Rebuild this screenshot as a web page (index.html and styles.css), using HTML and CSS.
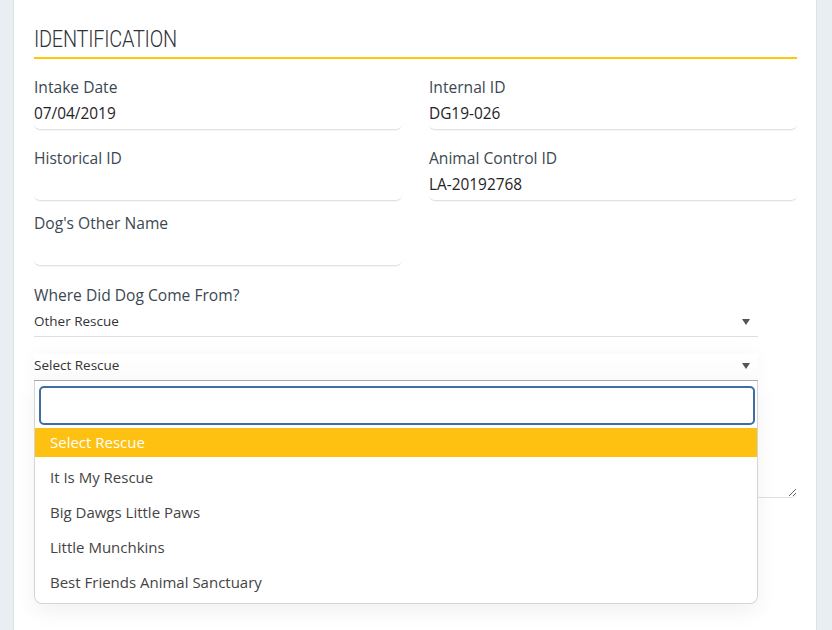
FILE: index.html
```html
<!DOCTYPE html>
<html>
<head>
<meta charset="utf-8">
<link rel="stylesheet" href="styles.css">
</head>
<body>
<div class="card">
  <h2 class="section-title"><span class="section-title-text">IDENTIFICATION</span></h2>
  <div class="grid">
    <div class="field">
      <label class="label">Intake Date</label>
      <div class="input">07/04/2019</div>
    </div>
    <div class="field">
      <label class="label">Internal ID</label>
      <div class="input">DG19-026</div>
    </div>
    <div class="field">
      <label class="label">Historical ID</label>
      <div class="input"></div>
    </div>
    <div class="field">
      <label class="label">Animal Control ID</label>
      <div class="input">LA-20192768</div>
    </div>
    <div class="field field-tight">
      <label class="label">Dog's Other Name</label>
      <div class="input"></div>
    </div>
  </div>

  <div class="field field-wide">
    <label class="label">Where Did Dog Come From?</label>
    <div class="select">
      <span>Other Rescue</span>
      <span class="arrow"></span>
    </div>
  </div>

  <div class="select-wrap">
    <div class="select select-open">
      <span>Select Rescue</span>
      <span class="arrow"></span>
    </div>
    <div class="dropdown">
      <div class="search"><input class="search-input" type="text"></div>
      <ul class="options">
        <li class="option option-active">Select Rescue</li>
        <li class="option">It Is My Rescue</li>
        <li class="option">Big Dawgs Little Paws</li>
        <li class="option">Little Munchkins</li>
        <li class="option">Best Friends Animal Sanctuary</li>
      </ul>
    </div>
  </div>

  <div class="textarea-field">
    <textarea class="textarea"></textarea>
  </div>
</div>
</body>
</html>
```

FILE: styles.css
```css
* { box-sizing: border-box; }
html, body { margin: 0; padding: 0; }
body {
  background: #e8eef2;
  font-family: "Open Sans", "Noto Sans", sans-serif;
  height: 630px;
  overflow: hidden;
  padding: 0 15px 0 13px;
}
.card {
  background: #fff;
  border-left: 1px solid #dbe2e8;
  border-right: 1px solid #dbe2e8;
  height: 630px;
  padding: 26px 19px 0 20px;
}
.section-title {
  margin: 0;
  font-family: Roboto, "Liberation Sans", sans-serif;
  font-weight: 300;
  font-size: 24px;
  line-height: 26px;
  height: 33px;
  color: #2f3338;
  padding-bottom: 5px;
  border-bottom: 2px solid #ffc60a;
  white-space: nowrap;
}
.section-title-text {
  display: inline-block;
  transform: scaleX(0.83);
  transform-origin: 0 0;
  letter-spacing: -0.3px;
}
.grid {
  display: grid;
  grid-template-columns: 368px 368px;
  column-gap: 27px;
  padding-top: 18px;
}
.field { margin-bottom: 18px; }
.field-tight { margin-top: -6px; margin-bottom: 19px; }
.label {
  display: block;
  font-size: 15.6px;
  line-height: 20px;
  color: #3b4852;
  margin-bottom: 7px;
}
.input {
  height: 26px;
  font-size: 15.4px;
  line-height: 20px;
  color: #1f2326;
  border-bottom: 1px solid #dde2e7;
  border-radius: 0 0 6px 6px;
  box-shadow: 0 1px 1px rgba(0,0,0,0.03);
}
.field-wide { width: 724px; margin-bottom: 0; }
.field-wide .label { margin-bottom: 5px; }
.select {
  position: relative;
  height: 27px;
  width: 724px;
  font-size: 13.5px;
  line-height: 22px;
  color: #333;
  border-bottom: 1px solid #dcdfe2;
}
.arrow {
  position: absolute;
  right: 8px;
  top: 9px;
  width: 0;
  height: 0;
  border-left: 4px solid transparent;
  border-right: 4px solid transparent;
  border-top: 6px solid #555;
}
.select-wrap {
  position: relative;
  width: 724px;
  margin-top: 17px;
  z-index: 2;
}
.select-open {
  border-bottom: 1px solid #aaa;
  background: linear-gradient(#fff, #fbfbfb);
  box-shadow: 0 0 20px rgba(0,0,0,0.04);
}
.dropdown {
  position: absolute;
  left: 0;
  top: 27px;
  width: 724px;
  background: #fff;
  border: 1px solid #d3d6d9;
  border-top: none;
  border-radius: 0 0 8px 8px;
  box-shadow: 0 8px 22px rgba(0,0,0,0.06);
}
.search { padding: 5px 2px 3px 4px; }
.search-input {
  display: block;
  width: 100%;
  height: 39px;
  border: 2px solid #3f6e9f;
  border-radius: 5px;
  outline: none;
  background: #fff;
  margin: 0;
}
.options {
  list-style: none;
  margin: 0;
  padding: 0 0 3px;
}
.option {
  height: 35px;
  line-height: 35px;
  padding-left: 15px;
  font-size: 15px;
  color: #444;
}
.option-active {
  height: 29px;
  line-height: 29px;
  margin-bottom: 3px;
  background: #fec111;
  color: #fff;
}
.textarea-field {
  margin-top: 14px;
}
.textarea {
  display: block;
  width: 100%;
  height: 103px;
  border: none;
  border-bottom: 1px solid #dde2e7;
  border-radius: 0 0 6px 6px;
  resize: vertical;
  font-family: inherit;
}
```
